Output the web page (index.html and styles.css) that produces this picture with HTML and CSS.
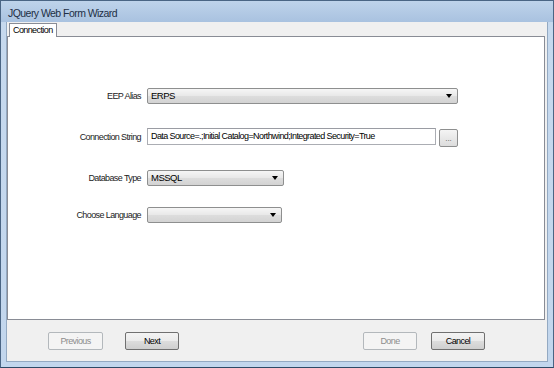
FILE: index.html
```html
<!DOCTYPE html>
<html>
<head>
<meta charset="utf-8">
<link rel="stylesheet" href="styles.css">
</head>
<body>
<div class="window">
  <div class="titlebar">JQuery Web Form Wizard</div>
  <div class="client">
    <div class="tabs"><div class="tab">Connection</div></div>
    <div class="panel">
      <div class="form">
        <div class="row r1">
          <div class="label">EEP Alias</div>
          <div class="combo w-wide"><span>ERPS</span><i class="arrow"></i></div>
        </div>
        <div class="row r2">
          <div class="label">Connection String</div>
          <div class="textbox">Data Source=.;Initial Catalog=Northwind;Integrated Security=True</div>
          <div class="dots">...</div>
        </div>
        <div class="row r3">
          <div class="label">Database Type</div>
          <div class="combo w-db"><span>MSSQL</span><i class="arrow"></i></div>
        </div>
        <div class="row r4">
          <div class="label">Choose Language</div>
          <div class="combo w-lang"><span></span><i class="arrow"></i></div>
        </div>
      </div>
    </div>
    <div class="footer">
      <div class="btn disabled b-prev">Previous</div>
      <div class="btn b-next">Next</div>
      <div class="spacer"></div>
      <div class="btn disabled b-done">Done</div>
      <div class="btn b-cancel">Cancel</div>
    </div>
  </div>
</div>
</body>
</html>
```

FILE: styles.css
```css
html, body {
  margin: 0;
  padding: 0;
  width: 554px;
  height: 368px;
  overflow: hidden;
  background: #ffffff;
}

.window {
  width: 554px;
  height: 368px;
  box-sizing: border-box;
  border: 1px solid #4a6584;
  border-bottom-color: #2d4a66;
  background: linear-gradient(#b4cbe6 0px, #c6d9ee 22px, #c2d6ed 100%);
  padding: 0 5px 5px 5px;
  display: flex;
  flex-direction: column;
  font-family: "Liberation Sans", Arial, sans-serif;
  font-size: 9px;
  letter-spacing: -0.6px;
  color: #000;
}

.titlebar {
  height: 21px;
  line-height: 24px;
  font-size: 10.5px;
  letter-spacing: -0.55px;
  color: #1e2f45;
  background: linear-gradient(#bed3ea, #a9c2e0);
  margin: 0 -5px;
  padding-left: 7px;
}

.client {
  flex: 1;
  background: #f0f0f0;
  border: 1px solid #93a9c2;
  border-top: none;
  display: flex;
  flex-direction: column;
}

.tabs {
  height: 14px;
  padding-left: 2px;
  display: flex;
  align-items: flex-end;
  background: #f0f0f0;
}

.tab {
  height: 14px;
  box-sizing: border-box;
  border: 1px solid #898c95;
  border-bottom: none;
  background: #fff;
  padding: 0 3px;
  line-height: 13px;
  position: relative;
  top: 1px;
  z-index: 1;
}

.panel {
  height: 284px;
  box-sizing: border-box;
  background: #fff;
  border: 1px solid #898c95;
  margin: 0 2px 0 0;
}

.form {
  display: flex;
  flex-direction: column;
  padding-top: 50px;
}

.row {
  display: flex;
  align-items: center;
  height: 17px;
}

.r2 { margin-top: 24px; }
.r3 { margin-top: 24px; }
.r4 { margin-top: 20px; }

.label {
  width: 133px;
  text-align: right;
  padding-right: 6px;
  color: #222;
}

.combo {
  height: 16px;
  box-sizing: border-box;
  border: 1px solid #8e8f8f;
  border-radius: 2px;
  background: linear-gradient(#f6f6f6 0%, #e8e8e8 50%, #dddddd 51%, #d3d3d3 100%);
  display: flex;
  align-items: center;
  padding-left: 3px;
  font-size: 9.5px;
  letter-spacing: -0.5px;
}

.combo span { flex: 1; }

.arrow {
  width: 0;
  height: 0;
  border-left: 3.5px solid transparent;
  border-right: 3.5px solid transparent;
  border-top: 4px solid #000;
  margin-right: 5px;
}

.w-wide { width: 311px; }
.w-db { width: 137px; }
.w-lang { width: 135px; }

.textbox {
  width: 289px;
  height: 17px;
  box-sizing: border-box;
  border: 1px solid #abadb3;
  border-top-color: #9a9ca3;
  background: #fff;
  padding-left: 3px;
  line-height: 15px;
  white-space: nowrap;
  overflow: hidden;
}

.dots {
  width: 19px;
  height: 18px;
  box-sizing: border-box;
  margin-left: 3px;
  margin-top: 2px;
  border: 1px solid #8e8f8f;
  border-radius: 2px;
  background: linear-gradient(#f4f4f4, #dcdcdc);
  font-size: 8px;
  letter-spacing: 0;
  line-height: 18px;
  text-align: center;
  color: #555;
}

.footer {
  flex: 1;
  display: flex;
  align-items: flex-start;
  padding-top: 12px;
  padding-left: 41px;
}

.btn {
  width: 55px;
  height: 18px;
  box-sizing: border-box;
  border: 1px solid #707070;
  border-radius: 2px;
  background: linear-gradient(#f3f3f3 0%, #ebebeb 50%, #dddddd 51%, #cfcfcf 100%);
  text-align: center;
  line-height: 16px;
  color: #000;
}

.btn.disabled {
  border-color: #b3b8bc;
  background: #f4f4f4;
  color: #8d8d8d;
}

.b-next { margin-left: 22px; width: 54px; }
.spacer { width: 184px; }
.b-done { width: 54px; }
.b-cancel { margin-left: 14px; width: 54px; }
```
